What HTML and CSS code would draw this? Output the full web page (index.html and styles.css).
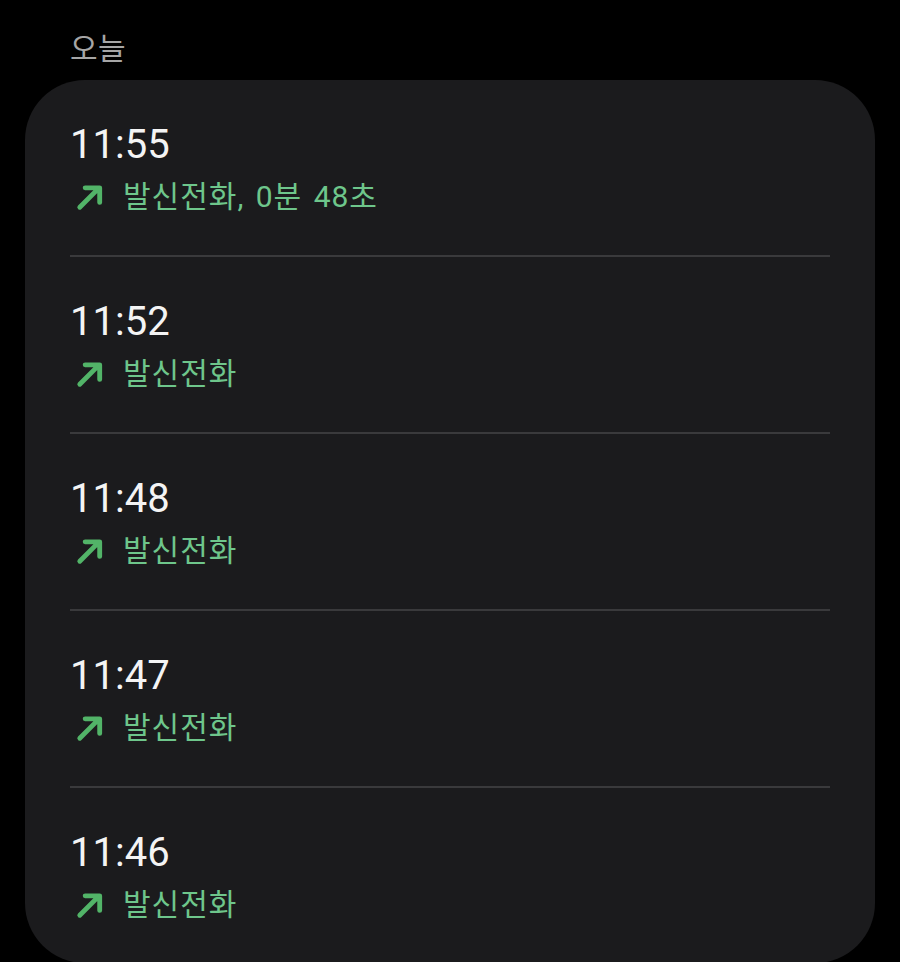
FILE: index.html
```html
<!DOCTYPE html>
<html lang="ko">
<head>
    <meta charset="UTF-8">
    <meta name="viewport" content="width=device-width, initial-scale=1.0">
    <title>통화 기록</title>
    <link rel="stylesheet" href="styles.css">
</head>
<body>
    <div class="section-title">오늘</div>

    <div class="card">
        <div class="call-row">
            <div class="call-time">11:55</div>
            <div class="call-info">
                <svg class="call-arrow" viewBox="0 0 26 26"><path d="M3.5 22.5 L21 5 M8.5 4.5 H22 V18"/></svg>
                <span>발신전화, 0분 48초</span>
            </div>
        </div>
        <div class="call-row">
            <div class="call-time">11:52</div>
            <div class="call-info">
                <svg class="call-arrow" viewBox="0 0 26 26"><path d="M3.5 22.5 L21 5 M8.5 4.5 H22 V18"/></svg>
                <span>발신전화</span>
            </div>
        </div>
        <div class="call-row">
            <div class="call-time">11:48</div>
            <div class="call-info">
                <svg class="call-arrow" viewBox="0 0 26 26"><path d="M3.5 22.5 L21 5 M8.5 4.5 H22 V18"/></svg>
                <span>발신전화</span>
            </div>
        </div>
        <div class="call-row">
            <div class="call-time">11:47</div>
            <div class="call-info">
                <svg class="call-arrow" viewBox="0 0 26 26"><path d="M3.5 22.5 L21 5 M8.5 4.5 H22 V18"/></svg>
                <span>발신전화</span>
            </div>
        </div>
        <div class="call-row">
            <div class="call-time">11:46</div>
            <div class="call-info">
                <svg class="call-arrow" viewBox="0 0 26 26"><path d="M3.5 22.5 L21 5 M8.5 4.5 H22 V18"/></svg>
                <span>발신전화</span>
            </div>
        </div>
    </div>
</body>
</html>
```

FILE: styles.css
```css
body, html {
    margin: 0;
    padding: 0;
    background-color: #000000;
    font-family: Roboto, "Noto Sans CJK KR", sans-serif;
    overflow: hidden;
}

.section-title {
    padding: 28px 70px 0;
    font-family: "Noto Sans CJK KR", Roboto, sans-serif;
    font-size: 30px;
    line-height: 36px;
    letter-spacing: 0.5px;
    color: #a6a6a6;
    margin-bottom: 16px;
}

.card {
    margin: 0 25px;
    padding: 0 45px;
    background-color: #1b1b1d;
    border-radius: 60px;
}

.call-row {
    padding: 41px 0 40px;
    border-top: 2px solid #3a3a3c;
}

.call-row:first-child {
    border-top: none;
}

.call-time {
    font-size: 40px;
    line-height: 48px;
    color: #f4f4f4;
}

.call-info {
    display: flex;
    align-items: center;
    margin-top: 10px;
    font-size: 30px;
    line-height: 36px;
    letter-spacing: 1px;
    word-spacing: 3px;
    color: #6ec68b;
}

.call-arrow {
    width: 28px;
    height: 28px;
    margin-left: 6px;
    margin-right: 19px;
    fill: none;
    stroke: #52b468;
    stroke-width: 4.5;
    stroke-linecap: round;
    stroke-linejoin: round;
}
```
